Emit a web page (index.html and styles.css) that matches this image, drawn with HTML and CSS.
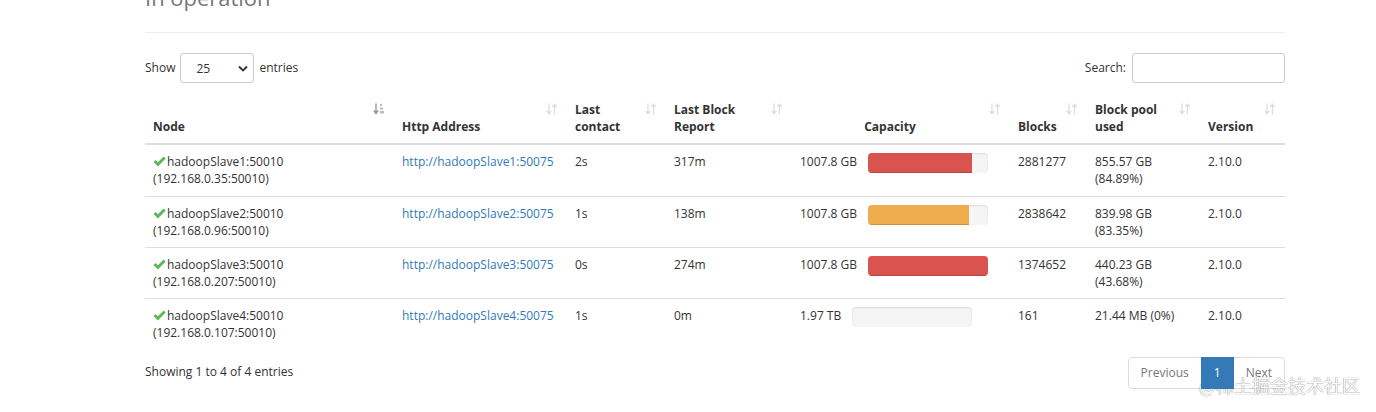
FILE: index.html
```html
<!DOCTYPE html>
<html>
<head>
<meta charset="utf-8">
<link rel="stylesheet" href="styles.css">
</head>
<body>
<div class="page">
  <div class="page-header"><h1><small>In operation</small></h1></div>

  <div class="dt-top">
    <label class="dt-length">Show
      <span class="select">25
        <svg class="chev" width="10" height="7" viewBox="0 0 10 7"><path d="M1 1.5 L5 5.5 L9 1.5" fill="none" stroke="#333" stroke-width="1.8"/></svg>
      </span>
      entries</label>
    <label class="dt-search">Search:<span class="input"></span></label>
  </div>

  <table class="table">
    <colgroup>
      <col style="width:249px"><col style="width:173px"><col style="width:99px"><col style="width:126px">
      <col style="width:218px"><col style="width:77px"><col style="width:113px"><col style="width:85px">
    </colgroup>
    <thead>
      <tr>
        <th class="sorting asc">Node<svg class="sort" width="12" height="12" viewBox="0 0 12 12"><path d="M3 0.5 V10 M0.8 7.5 L3 10.5 L5.2 7.5" fill="none" stroke="#999" stroke-width="1.4"/><path d="M7 1h2v2h-2z M7 4.5h3v2h-3z M7 8h4v2.5h-4z" fill="#bbb"/></svg></th>
        <th class="sorting">Http Address<svg class="sort" width="12" height="12" viewBox="0 0 12 12"><path d="M3 0.5 V10.5 M0.8 8 L3 10.8 L5.2 8" fill="none" stroke="#ddd" stroke-width="1.3"/><path d="M8.5 11.5 V1.5 M6.3 4 L8.5 1.2 L10.7 4" fill="none" stroke="#ddd" stroke-width="1.3"/></svg></th>
        <th class="sorting">Last<br>contact<svg class="sort" width="12" height="12" viewBox="0 0 12 12"><path d="M3 0.5 V10.5 M0.8 8 L3 10.8 L5.2 8" fill="none" stroke="#ddd" stroke-width="1.3"/><path d="M8.5 11.5 V1.5 M6.3 4 L8.5 1.2 L10.7 4" fill="none" stroke="#ddd" stroke-width="1.3"/></svg></th>
        <th class="sorting">Last Block<br>Report<svg class="sort" width="12" height="12" viewBox="0 0 12 12"><path d="M3 0.5 V10.5 M0.8 8 L3 10.8 L5.2 8" fill="none" stroke="#ddd" stroke-width="1.3"/><path d="M8.5 11.5 V1.5 M6.3 4 L8.5 1.2 L10.7 4" fill="none" stroke="#ddd" stroke-width="1.3"/></svg></th>
        <th class="sorting center">Capacity<svg class="sort" width="12" height="12" viewBox="0 0 12 12"><path d="M3 0.5 V10.5 M0.8 8 L3 10.8 L5.2 8" fill="none" stroke="#ddd" stroke-width="1.3"/><path d="M8.5 11.5 V1.5 M6.3 4 L8.5 1.2 L10.7 4" fill="none" stroke="#ddd" stroke-width="1.3"/></svg></th>
        <th class="sorting">Blocks<svg class="sort" width="12" height="12" viewBox="0 0 12 12"><path d="M3 0.5 V10.5 M0.8 8 L3 10.8 L5.2 8" fill="none" stroke="#ddd" stroke-width="1.3"/><path d="M8.5 11.5 V1.5 M6.3 4 L8.5 1.2 L10.7 4" fill="none" stroke="#ddd" stroke-width="1.3"/></svg></th>
        <th class="sorting">Block pool<br>used<svg class="sort" width="12" height="12" viewBox="0 0 12 12"><path d="M3 0.5 V10.5 M0.8 8 L3 10.8 L5.2 8" fill="none" stroke="#ddd" stroke-width="1.3"/><path d="M8.5 11.5 V1.5 M6.3 4 L8.5 1.2 L10.7 4" fill="none" stroke="#ddd" stroke-width="1.3"/></svg></th>
        <th class="sorting">Version<svg class="sort" width="12" height="12" viewBox="0 0 12 12"><path d="M3 0.5 V10.5 M0.8 8 L3 10.8 L5.2 8" fill="none" stroke="#ddd" stroke-width="1.3"/><path d="M8.5 11.5 V1.5 M6.3 4 L8.5 1.2 L10.7 4" fill="none" stroke="#ddd" stroke-width="1.3"/></svg></th>
      </tr>
    </thead>
    <tbody>
      <tr>
        <td><svg class="ok" width="13" height="11" viewBox="0 0 13 11"><path d="M0.5 6 L2.6 3.9 L4.9 6.2 L10.6 0.5 L12.7 2.6 L4.9 10.4 Z" fill="#5cb85c"/></svg>hadoopSlave1:50010<br>(192.168.0.35:50010)</td>
        <td><a href="#">http://hadoopSlave1:50075</a></td>
        <td>2s</td>
        <td>317m</td>
        <td><div class="cap"><span class="cap-val">1007.8 GB</span><div class="progress"><div class="bar danger" style="width:86.7%"></div></div></div></td>
        <td>2881277</td>
        <td>855.57 GB<br>(84.89%)</td>
        <td>2.10.0</td>
      </tr>
      <tr>
        <td><svg class="ok" width="13" height="11" viewBox="0 0 13 11"><path d="M0.5 6 L2.6 3.9 L4.9 6.2 L10.6 0.5 L12.7 2.6 L4.9 10.4 Z" fill="#5cb85c"/></svg>hadoopSlave2:50010<br>(192.168.0.96:50010)</td>
        <td><a href="#">http://hadoopSlave2:50075</a></td>
        <td>1s</td>
        <td>138m</td>
        <td><div class="cap"><span class="cap-val">1007.8 GB</span><div class="progress"><div class="bar warning" style="width:84.2%"></div></div></div></td>
        <td>2838642</td>
        <td>839.98 GB<br>(83.35%)</td>
        <td>2.10.0</td>
      </tr>
      <tr>
        <td><svg class="ok" width="13" height="11" viewBox="0 0 13 11"><path d="M0.5 6 L2.6 3.9 L4.9 6.2 L10.6 0.5 L12.7 2.6 L4.9 10.4 Z" fill="#5cb85c"/></svg>hadoopSlave3:50010<br>(192.168.0.207:50010)</td>
        <td><a href="#">http://hadoopSlave3:50075</a></td>
        <td>0s</td>
        <td>274m</td>
        <td><div class="cap"><span class="cap-val">1007.8 GB</span><div class="progress"><div class="bar danger" style="width:100%"></div></div></div></td>
        <td>1374652</td>
        <td>440.23 GB<br>(43.68%)</td>
        <td>2.10.0</td>
      </tr>
      <tr>
        <td><svg class="ok" width="13" height="11" viewBox="0 0 13 11"><path d="M0.5 6 L2.6 3.9 L4.9 6.2 L10.6 0.5 L12.7 2.6 L4.9 10.4 Z" fill="#5cb85c"/></svg>hadoopSlave4:50010<br>(192.168.0.107:50010)</td>
        <td><a href="#">http://hadoopSlave4:50075</a></td>
        <td>1s</td>
        <td>0m</td>
        <td><div class="cap"><span class="cap-val">1.97 TB</span><div class="progress"><div class="bar" style="width:0%"></div></div></div></td>
        <td>161</td>
        <td>21.44 MB (0%)</td>
        <td>2.10.0</td>
      </tr>
    </tbody>
  </table>

  <div class="dt-bottom">
    <div class="dt-info">Showing 1 to 4 of 4 entries</div>
    <ul class="pagination">
      <li class="disabled first"><span>Previous</span></li>
      <li class="active"><span>1</span></li>
      <li class="disabled last"><span>Next</span></li>
    </ul>
  </div>
</div>
<div class="watermark">@稀土掘金技术社区</div>
</body>
</html>
```

FILE: styles.css
```css
html, body {
  margin: 0;
  padding: 0;
  background: #fff;
  overflow: hidden;
}
body {
  font-family: "Open Sans", "Noto Sans", "Noto Sans CJK SC", sans-serif;
  font-size: 12px;
  line-height: 1.42857;
  color: #333;
  width: 1376px;
  height: 412px;
  position: relative;
}
.page {
  padding-left: 145px;
  width: 1140px;
}
.page-header {
  margin: 0 0 20px;
  padding-bottom: 9px;
  border-bottom: 1px solid #eee;
}
.page-header h1 {
  margin: -26.6px 0 10px;
  font-size: 36px;
  line-height: 1.1;
  font-weight: 500;
}
.page-header h1 small {
  font-size: 61%;
  color: #777;
  font-weight: 400;
}
.dt-top {
  display: flex;
  justify-content: space-between;
  align-items: center;
  height: 30px;
}
.dt-length, .dt-search {
  display: flex;
  align-items: center;
  font-weight: 400;
}
.select {
  box-sizing: border-box;
  width: 74px;
  height: 30px;
  margin: 0 5px 0 5px;
  border: 1px solid #ccc;
  border-radius: 3px;
  padding: 2px 0 0 15px;
  display: flex;
  align-items: center;
  justify-content: space-between;
  padding-right: 5px;
}
.chev { margin-top: -1px; }
.input {
  box-sizing: border-box;
  width: 153px;
  height: 30px;
  margin-left: 6px;
  border: 1px solid #ccc;
  border-radius: 3px;
  display: block;
}
.table {
  width: 1140px;
  table-layout: fixed;
  border-collapse: collapse;
  border-spacing: 0;
  margin-top: 10px;
}
.table th {
  position: relative;
  text-align: left;
  vertical-align: bottom;
  font-weight: 700;
  padding: 8px 30px 8px 8px;
  border-bottom: 2px solid #ddd;
}
.table th.center { text-align: center; }
.table th .sort {
  position: absolute;
  top: 10px;
  right: 9px;
}
.table td {
  vertical-align: top;
  padding: 8px;
  border-top: 1px solid #ddd;
  white-space: nowrap;
}
.table tbody tr:first-child td { border-top: 0; }
.ok {
  vertical-align: -1px;
  margin-right: 1px;
}
a {
  color: #337ab7;
  text-decoration: none;
}
.cap { display: flex; }
.cap-val { padding-right: 11px; }
.progress {
  width: 120px;
  height: 20px;
  background: #f5f5f5;
  border-radius: 4px;
  box-shadow: inset 0 1px 2px rgba(0,0,0,.1);
  overflow: hidden;
}
.bar {
  height: 100%;
  box-shadow: inset 0 -1px 0 rgba(0,0,0,.15);
}
.bar.danger { background: #d9534f; }
.bar.warning { background: #f0ad4e; }
.dt-bottom {
  display: flex;
  justify-content: space-between;
  align-items: flex-start;
  margin-top: 6px;
}
.dt-info { padding-top: 8px; }
.pagination {
  display: flex;
  list-style: none;
  margin: 2px 0 0;
  padding: 0;
}
.pagination li span {
  display: block;
  padding: 6px 12px;
  border: 1px solid #ddd;
  margin-left: -1px;
  color: #777;
  background: #fff;
}
.pagination li.first span { border-radius: 4px 0 0 4px; margin-left: 0; }
.pagination li.last span { border-radius: 0 4px 4px 0; }
.pagination li.active span {
  background: #337ab7;
  border-color: #337ab7;
  color: #fff;
  position: relative;
  z-index: 1;
}
.watermark {
  position: absolute;
  left: 1199px;
  top: 373px;
  font-family: "Noto Sans CJK SC", sans-serif;
  font-size: 18px;
  line-height: 24px;
  color: #fff;
  text-shadow: 0 0 1px rgba(0,0,0,.45), 0 0 1px rgba(0,0,0,.3);
}
```
